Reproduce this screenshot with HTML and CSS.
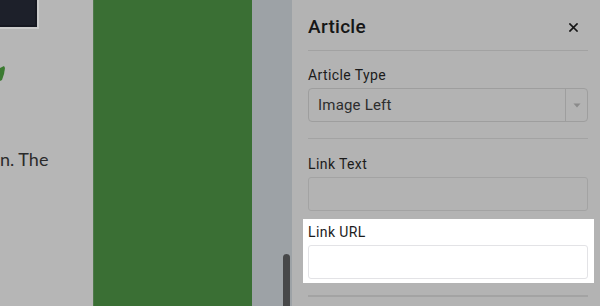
FILE: index.html
```html
<!DOCTYPE html>
<html>
<head>
<meta charset="utf-8">
<link rel="stylesheet" href="styles.css">
</head>
<body>
<div class="page">
  <div class="content">
    <div class="thumb"></div>
    <svg class="leaf" width="6" height="16" viewBox="0 0 6 16"><path d="M0 3 L4 1 L5 3 L4 9 L2 15 L0 16 Z" fill="#3b7a31"/></svg>
    <p class="line">n. The</p>
  </div>
  <div class="green"></div>
  <div class="gutter"><div class="scrollbar"></div></div>
  <aside class="panel">
    <div class="header">
      <h1 class="title">Article</h1>
      <button class="close" aria-label="Close"><svg width="9" height="9" viewBox="0 0 9 9"><path d="M1 1 L8 8 M8 1 L1 8" stroke="#161616" stroke-width="1.7" stroke-linecap="square"/></svg></button>
    </div>
    <div class="section first">
      <label class="label">Article Type</label>
      <div class="select">
        <span class="value">Image Left</span>
        <span class="arrow"><svg width="8" height="5" viewBox="0 0 8 5"><path d="M0.5 0.5 L7.5 0.5 L4 4.5 Z" fill="#8a8a8a"/></svg></span>
      </div>
    </div>
    <div class="section second">
      <div class="field">
        <label class="label">Link Text</label>
        <div class="input"></div>
      </div>
      <div class="field spot">
        <label class="label">Link URL</label>
        <div class="input"></div>
      </div>
    </div>
  </aside>
</div>
</body>
</html>
```
FILE: styles.css
```css
html, body {
  margin: 0;
  padding: 0;
}
body {
  width: 600px;
  height: 306px;
  overflow: hidden;
  background: #b6b6b6;
}
.page {
  display: flex;
  height: 306px;
}
.content {
  width: 93px;
  flex: none;
  background: #b6b6b6;
  display: flex;
  flex-direction: column;
}
.thumb {
  width: 37px;
  height: 27px;
  background: #1d202a;
  border-right: 2px solid #cbcbcb;
  border-bottom: 2px solid #cbcbcb;
  box-shadow: inset -2px -2px 0 #161821;
}
.leaf {
  display: block;
  margin-top: 36px;
}
.line {
  margin: 66px 0 0;
  white-space: nowrap;
  font-family: "Lato", "Open Sans", sans-serif;
  font-size: 18px;
  line-height: 24px;
  color: #2b2b2b;
}
.green {
  width: 159px;
  flex: none;
  background: #3a6f34;
  border-left: 1px solid #4f7a4a;
  box-sizing: border-box;
}
.gutter {
  width: 40px;
  flex: none;
  background: #9da2a6;
  position: relative;
}
.scrollbar {
  position: absolute;
  left: 31px;
  top: 254px;
  width: 7px;
  height: 60px;
  border-radius: 4px;
  background: #474849;
}
.panel {
  width: 308px;
  flex: none;
  box-sizing: border-box;
  background: #b3b3b3;
  padding: 0 12px 0 16px;
  font-family: "Roboto", "Liberation Sans", sans-serif;
  color: #1b1b1b;
}
.header {
  display: flex;
  align-items: center;
  justify-content: space-between;
  padding: 15px 0 11px;
  border-bottom: 1px solid #a2a2a2;
}
.title {
  margin: 0;
  font-size: 19px;
  line-height: 24px;
  font-weight: 500;
  letter-spacing: 0.3px;
  color: #161616;
}
.close {
  width: 30px;
  height: 24px;
  border: 0;
  padding: 0;
  background: transparent;
  display: flex;
  align-items: center;
  justify-content: center;
}
.section {
  padding: 15px 0 16px;
  border-bottom: 1px solid #a3a3a3;
}
.section.second {
  padding-top: 16px;
  border-bottom-width: 2px;
}
.label {
  display: block;
  font-size: 14px;
  line-height: 18px;
  font-weight: 400;
  letter-spacing: 0.4px;
  margin-bottom: 4px;
  color: #1b1b1b;
}
.select {
  height: 34px;
  box-sizing: border-box;
  border: 1px solid #9e9e9e;
  border-radius: 4px;
  display: flex;
  align-items: stretch;
}
.value {
  flex: 1;
  display: flex;
  align-items: center;
  padding-left: 9px;
  font-size: 15px;
  letter-spacing: 0.2px;
  color: #2d2d2d;
}
.arrow {
  width: 21px;
  border-left: 1px solid #9e9e9e;
  display: flex;
  align-items: center;
  justify-content: center;
}
.input {
  height: 34px;
  box-sizing: border-box;
  border: 1px solid #a3a3a3;
  border-radius: 3px;
}
.field + .field {
  margin-top: 12px;
}
.spot {
  background: #ffffff;
  box-shadow: -1px 0 0 4px #ffffff, 2px 0 0 4px #ffffff;
}
.spot .label {
  color: #1c1c1c;
}
.spot .input {
  border-color: #e3e3e6;
  background: #ffffff;
}
```
